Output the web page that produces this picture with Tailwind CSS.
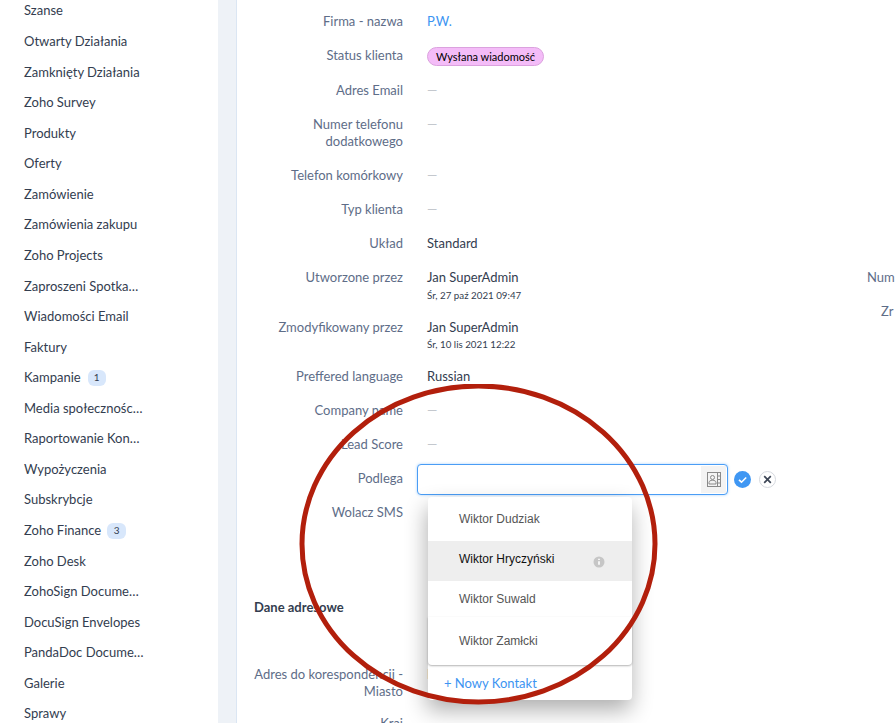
<!DOCTYPE html>
<html lang="pl">
<head>
  <meta charset="UTF-8">
  <meta name="viewport" content="width=device-width, initial-scale=1">
  <title>Lead</title>
  <script src="https://cdn.jsdelivr.net/npm/@tailwindcss/browser@4"></script>
</head>
<body class="bg-white h-screen overflow-hidden flex font-['Lato','Liberation_Sans',sans-serif] text-[13px] leading-[17px] text-[#333d4f]">

  <!-- Sidebar -->
  <nav class="w-[218px] shrink-0 pl-[24px] -mt-[4.3px]">
    <div class="h-[30.565px] flex items-center">Szanse</div>
    <div class="h-[30.565px] flex items-center">Otwarty Działania</div>
    <div class="h-[30.565px] flex items-center">Zamknięty Działania</div>
    <div class="h-[30.565px] flex items-center">Zoho Survey</div>
    <div class="h-[30.565px] flex items-center">Produkty</div>
    <div class="h-[30.565px] flex items-center">Oferty</div>
    <div class="h-[30.565px] flex items-center">Zamówienie</div>
    <div class="h-[30.565px] flex items-center">Zamówienia zakupu</div>
    <div class="h-[30.565px] flex items-center">Zoho Projects</div>
    <div class="h-[30.565px] flex items-center">Zaproszeni Spotka…</div>
    <div class="h-[30.565px] flex items-center">Wiadomości Email</div>
    <div class="h-[30.565px] flex items-center">Faktury</div>
    <div class="h-[30.565px] flex items-center gap-[7px]"><span>Kampanie</span><span class="w-[18px] h-[16px] rounded-[6px] bg-[#d8e7fb] text-[10px] flex items-center justify-center">1</span></div>
    <div class="h-[30.565px] flex items-center">Media społecznośc…</div>
    <div class="h-[30.565px] flex items-center">Raportowanie Kon…</div>
    <div class="h-[30.565px] flex items-center">Wypożyczenia</div>
    <div class="h-[30.565px] flex items-center">Subskrybcje</div>
    <div class="h-[30.565px] flex items-center gap-[6px]"><span>Zoho Finance</span><span class="w-[19px] h-[16px] rounded-[6px] bg-[#d8e7fb] text-[10px] flex items-center justify-center">3</span></div>
    <div class="h-[30.565px] flex items-center">Zoho Desk</div>
    <div class="h-[30.565px] flex items-center">ZohoSign Docume…</div>
    <div class="h-[30.565px] flex items-center">DocuSign Envelopes</div>
    <div class="h-[30.565px] flex items-center">PandaDoc Docume…</div>
    <div class="h-[30.565px] flex items-center">Galerie</div>
    <div class="h-[30.565px] flex items-center">Sprawy</div>
  </nav>

  <!-- Gutter -->
  <div class="w-[19px] shrink-0 bg-[#eef2f7] border-r border-[#dbe6f3]"></div>

  <!-- Detail -->
  <main class="relative flex-1 flex min-w-0 pt-[13px]">
    <section class="w-[630px] shrink-0">
      <div class="flex h-[34px]"><div class="w-[166px] text-right text-[#5e6d88]">Firma - nazwa</div><div class="ml-[24px] text-[#3c94f2]">P.W.</div></div>
      <div class="flex h-[35px]"><div class="w-[166px] text-right text-[#5e6d88]">Status klienta</div><div class="ml-[24px]"><span class="flex items-center h-[19px] w-[117px] justify-center rounded-full bg-[#f4bcf8] border border-[#dba2de] text-[11px] text-black">Wysłana wiadomość</span></div></div>
      <div class="flex h-[34px]"><div class="w-[166px] text-right text-[#5e6d88]">Adres Email</div><div class="ml-[24px] text-[#c4c8ce]">—</div></div>
      <div class="flex h-[51px]"><div class="w-[166px] text-right text-[#5e6d88] pl-[50px]">Numer telefonu dodatkowego</div><div class="ml-[24px] text-[#c4c8ce]">—</div></div>
      <div class="flex h-[34px]"><div class="w-[166px] text-right text-[#5e6d88]">Telefon komórkowy</div><div class="ml-[24px] text-[#c4c8ce]">—</div></div>
      <div class="flex h-[34px]"><div class="w-[166px] text-right text-[#5e6d88]">Typ klienta</div><div class="ml-[24px] text-[#c4c8ce]">—</div></div>
      <div class="flex h-[34px]"><div class="w-[166px] text-right text-[#5e6d88]">Układ</div><div class="ml-[24px]">Standard</div></div>
      <div class="flex h-[50px]"><div class="w-[166px] text-right text-[#5e6d88]">Utworzone przez</div><div class="ml-[24px]"><div>Jan SuperAdmin</div><div class="text-[9.75px] leading-[13px] mt-[3px]">Śr, 27 paź 2021 09:47</div></div></div>
      <div class="flex h-[49px]"><div class="w-[166px] text-right text-[#5e6d88]">Zmodyfikowany przez</div><div class="ml-[24px]"><div>Jan SuperAdmin</div><div class="text-[9.75px] leading-[13px] mt-[2px]">Śr, 10 lis 2021 12:22</div></div></div>
      <div class="flex h-[34px]"><div class="w-[166px] text-right text-[#5e6d88]">Preffered language</div><div class="ml-[24px]">Russian</div></div>
      <div class="flex h-[34px]"><div class="w-[166px] text-right text-[#5e6d88]">Company name</div><div class="ml-[24px] text-[#c4c8ce]">—</div></div>
      <div class="flex h-[34px]"><div class="w-[166px] text-right text-[#5e6d88]">Lead Score</div><div class="ml-[24px] text-[#c4c8ce]">—</div></div>
      <div class="flex h-[34px]">
        <div class="w-[166px] text-right text-[#5e6d88]">Podlega</div>
        <div class="ml-[14px] -mt-[6px] flex items-center h-[31px]">
          <div class="w-[311px] h-[31px] rounded-[4px] bg-white border border-[#4a9df5] shadow-[0_0_3px_#a9d2fb] flex justify-end items-center pr-[1px]">
            <div class="w-[25px] h-[27px] bg-[#f3f3f3] flex items-center justify-center">
              <svg width="14" height="15" viewBox="0 0 14 15" fill="none" stroke="#8a8a8a" stroke-width="1">
                <rect x="0.5" y="0.5" width="13" height="14"/>
                <path d="M10.5 1v13M10.5 4h3M10.5 7.5h3M10.5 11h3"/>
                <circle cx="5.5" cy="5.5" r="2"/>
                <path d="M2 12v-1.5c0-1.5 1.5-2.2 3.5-2.2S9 9 9 10.5V12z"/>
              </svg>
            </div>
          </div>
          <svg class="ml-[6px]" width="17" height="17" viewBox="0 0 17 17">
            <circle cx="8.5" cy="8.5" r="8.5" fill="#3f97f3"/>
            <path d="M5 8.8l2.5 2.4L12.2 6.5" fill="none" stroke="#fff" stroke-width="1.6"/>
          </svg>
          <svg class="ml-[8px]" width="17" height="17" viewBox="0 0 17 17">
            <circle cx="8.5" cy="8.5" r="8" fill="#fff" stroke="#d5d8de"/>
            <path d="M5.2 5.2l6.6 6.6M11.8 5.2l-6.6 6.6" fill="none" stroke="#3d4656" stroke-width="1.7"/>
          </svg>
        </div>
      </div>
      <div class="flex h-[86px]"><div class="w-[166px] text-right text-[#5e6d88]">Wolacz SMS</div></div>
      <div class="h-[76px] pt-[9px] pl-[17px] font-bold">Dane adresowe</div>
      <div class="flex h-[49px]"><div class="w-[166px] text-right text-[#5e6d88]">Adres do korespondencji - Miasto</div><div class="ml-[24px]">L</div></div>
      <div class="flex h-[34px]"><div class="w-[166px] text-right text-[#5e6d88]">Kraj</div></div>
    </section>

    <!-- Second column, cut by the window edge -->
    <section class="flex flex-col items-start text-[#5e6d88] whitespace-nowrap pt-[256px]">
      <div class="h-[34px]">Num</div>
      <div class="ml-[14px]">Zr</div>
    </section>

    <!-- Contact dropdown -->
    <div class="absolute left-[191px] top-[497px] w-[204px] rounded-[4px] bg-white shadow-[-1px_10px_22px_rgba(0,0,0,0.32)] font-['Liberation_Sans',sans-serif] text-[12px] text-[#555]">
      <div class="h-[44px] flex items-center pl-[31px]">Wiktor Dudziak</div>
      <div class="h-[40px] flex items-center justify-between pl-[31px] pr-[27px] pb-[3px] bg-[#eeeeee] text-[#111]">
        <span>Wiktor Hryczyński</span>
        <svg class="mt-[5px]" width="12" height="12" viewBox="0 0 12 12">
          <circle cx="6" cy="6" r="5.5" fill="#c6c6c6"/>
          <path d="M6 5.2v3.6M6 2.8v1.2" stroke="#fff" stroke-width="1.6"/>
        </svg>
      </div>
      <div class="h-[36px] flex items-center pl-[31px]">Wiktor Suwald</div>
      <div class="h-[48px] flex items-center pl-[31px] rounded-b-[4px] shadow-[0_1px_2px_rgba(0,0,0,0.3)]">Wiktor Zamłcki</div>
      <div class="h-[35px] flex items-center pl-[16px] pt-[2px] font-['Lato',sans-serif] text-[13px] text-[#3c94f2]">+ Nowy Kontakt</div>
    </div>

    <!-- Red annotation circle -->
    <svg class="absolute left-[61px] top-[384px] pointer-events-none" width="362" height="322" viewBox="0 0 362 322" fill="none">
      <ellipse cx="180.5" cy="160" rx="176.5" ry="158" stroke="#b21f0c" stroke-width="5"/>
    </svg>
  </main>
</body>
</html>
